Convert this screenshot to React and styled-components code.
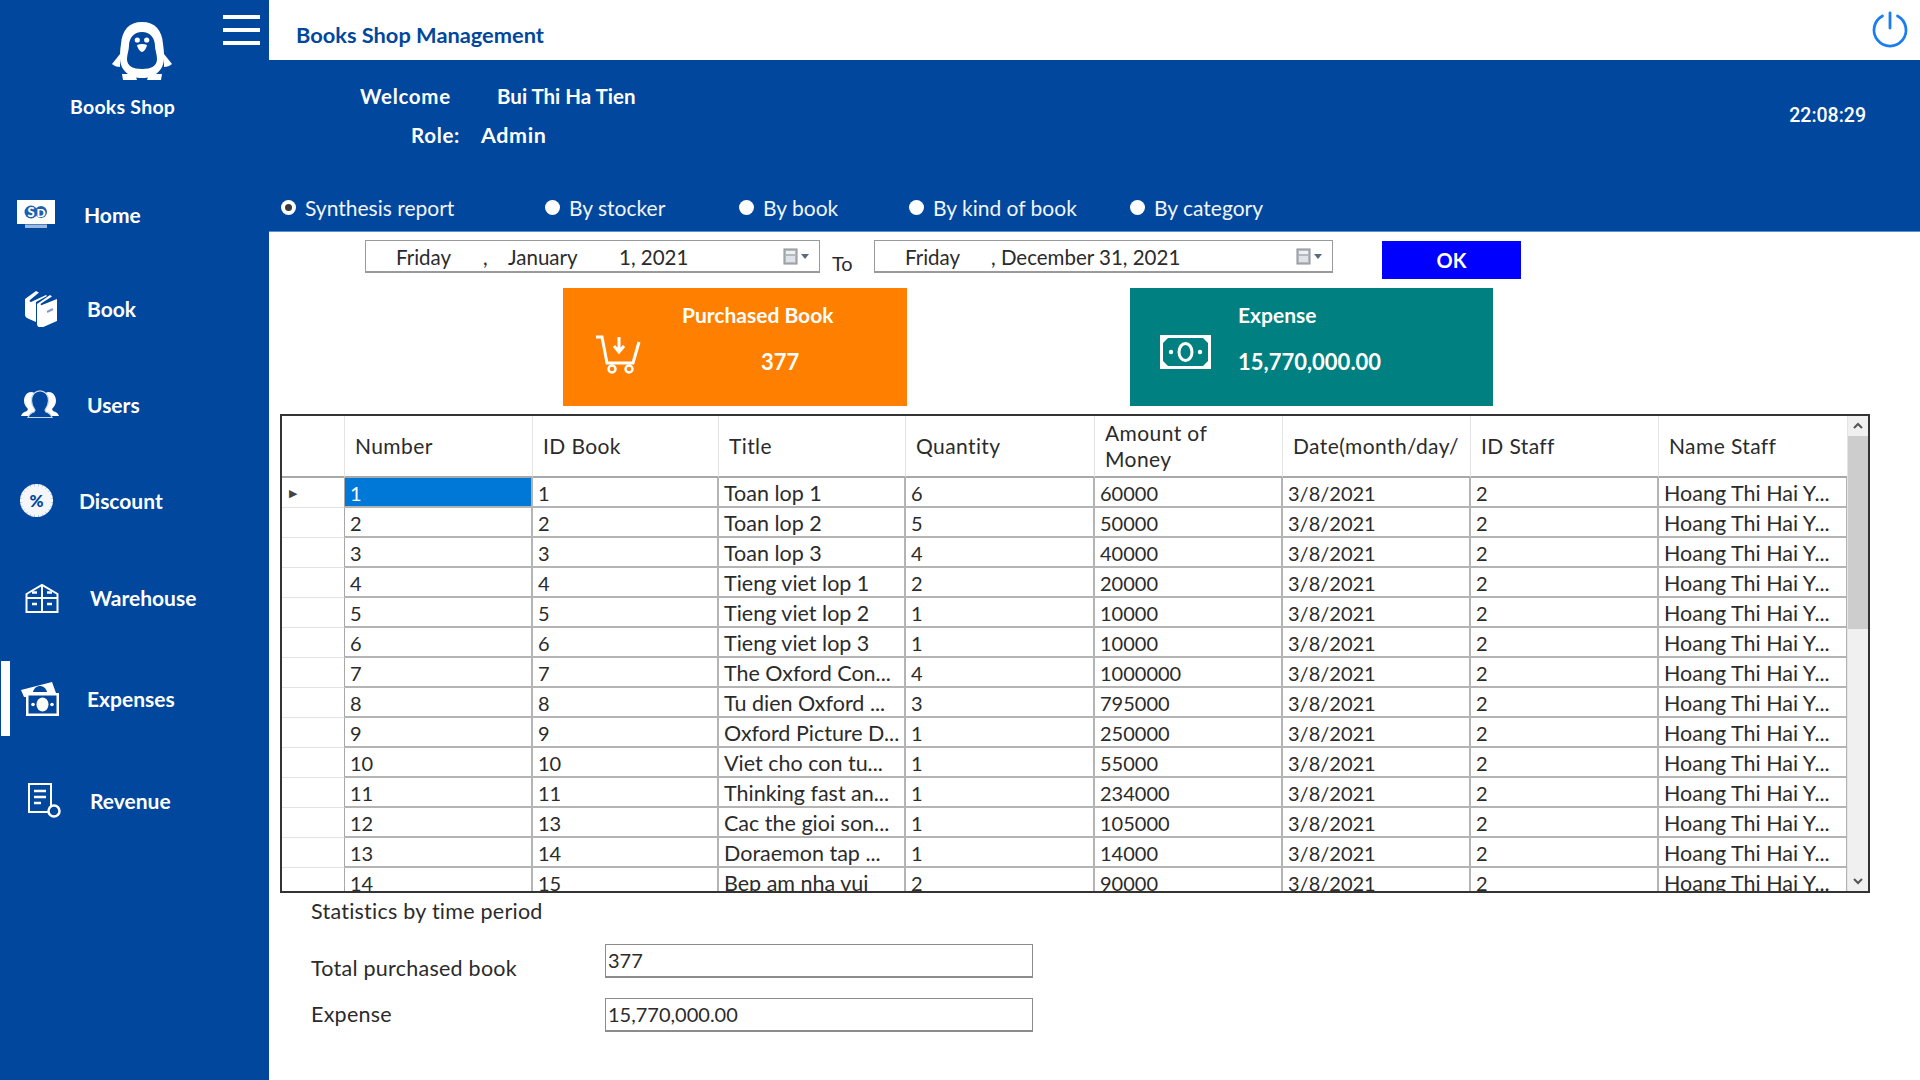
import React from "react";
import styled, { createGlobalStyle } from "styled-components";

const FONT = `"Lato", "Open Sans", sans-serif`;
const BLUE = "#00479d";

const GlobalStyle = createGlobalStyle`
  html, body {
    margin: 0;
    padding: 0;
    background: #fff;
    overflow: hidden;
  }
  * {
    box-sizing: border-box;
  }
`;

const Page = styled.div`
  width: 1920px;
  height: 1080px;
  display: flex;
  font-family: ${FONT};
  color: #2b2b2b;
  overflow: hidden;
`;

const Sidebar = styled.aside`
  width: 269px;
  flex: none;
  background: ${BLUE};
  color: #fff;
`;

const SidebarHead = styled.div`
  height: 158px;
  display: flex;
  align-items: flex-start;
`;

const Brand = styled.div`
  width: 223px;
  display: flex;
  flex-direction: column;
  padding-top: 20px;
`;

const Logo = styled.svg`
  width: 60px;
  height: 60px;
  margin-left: 112px;
`;

const BrandName = styled.div`
  margin: 15px 0 0 70px;
  font-size: 19.5px;
  font-weight: 700;
  letter-spacing: 0.25px;
`;

const Burger = styled.div`
  width: 37px;
  margin-top: 15px;
  display: flex;
  flex-direction: column;
  gap: 9px;

  span {
    height: 4px;
    background: #fff;
  }
`;

const Nav = styled.nav`
  display: flex;
  flex-direction: column;
`;

const NavItem = styled.a`
  height: 75px;
  margin-top: ${(p) => p.$gap}px;
  padding-left: ${(p) => p.$iconX}px;
  display: flex;
  align-items: center;
  position: relative;
  font-size: 21px;
  font-weight: 700;

  &::before {
    content: "";
    display: ${(p) => (p.$active ? "block" : "none")};
    position: absolute;
    left: 1px;
    top: 0;
    bottom: 0;
    width: 9px;
    background: #fff;
  }
`;

const NavIcon = styled.span`
  width: ${(p) => p.$width}px;
  flex: none;
  display: flex;
  align-items: center;

  svg {
    display: block;
  }
`;

const Main = styled.main`
  flex: 1;
  min-width: 0;
  display: flex;
  flex-direction: column;
`;

const TopBar = styled.header`
  height: 60px;
  flex: none;
  padding: 0 10px 0 27px;
  display: flex;
  align-items: center;
  justify-content: space-between;
`;

const AppTitle = styled.h1`
  margin: 9px 0 0;
  font-size: 21.8px;
  font-weight: 700;
  color: ${BLUE};
`;

const PowerIcon = styled.svg`
  width: 40px;
  height: 40px;
`;

const Band = styled.section`
  height: 172px;
  flex: none;
  background: ${BLUE};
  color: #fff;
  display: flex;
  flex-direction: column;
  border-bottom: 1px solid #5b8fcb;
`;

const BandTop = styled.div`
  height: 135px;
  padding: 0 54px 0 0;
  display: flex;
  justify-content: space-between;
`;

const Welcome = styled.div`
  padding-top: 23px;
  display: flex;
  flex-direction: column;
  gap: 13px;
`;

const WelcomeRow = styled.div`
  display: flex;
  height: 26px;
  align-items: center;
  padding-left: ${(p) => p.$left}px;
  font-size: 20.5px;
  font-weight: 700;
`;

const WelcomeLabel = styled.span`
  width: ${(p) => p.$width}px;
  letter-spacing: 0.7px;
`;

const RoleName = styled.span`
  font-size: 21.5px;
  letter-spacing: 0.6px;
`;

const Clock = styled.div`
  padding-top: 44px;
  font-family: "Roboto", sans-serif;
  font-size: 19.5px;
  font-weight: 500;
`;

const RadioRow = styled.div`
  padding-left: 12px;
  display: flex;
  align-items: center;
  height: 24px;
`;

const Radio = styled.label`
  width: ${(p) => p.$width}px;
  flex: none;
  display: flex;
  align-items: center;
  gap: 9px;
  font-size: 21px;
  color: #f1f5fb;
`;

const RadioDot = styled.span`
  width: 15px;
  height: 15px;
  border-radius: 50%;
  background: #fff;
  flex: none;
  display: flex;
  align-items: center;
  justify-content: center;

  &::after {
    content: "";
    display: ${(p) => (p.$checked ? "block" : "none")};
    width: 7px;
    height: 7px;
    border-radius: 50%;
    background: #3a3a3a;
  }
`;

const Content = styled.div`
  flex: 1;
  min-height: 0;
`;

const DateRow = styled.div`
  height: 39px;
  margin-top: 8px;
  padding-left: 96px;
  display: flex;
  align-items: flex-start;
`;

const DateBox = styled.div`
  width: ${(p) => p.$width}px;
  height: 33px;
  flex: none;
  padding: 2px 9px 0 30px;
  border: 1px solid #9a9a9a;
  border-bottom-width: 2px;
  display: flex;
  align-items: center;
  font-size: 20.5px;
  white-space: pre;
`;

const DatePart = styled.span`
  width: ${(p) => p.$width}px;
  flex: none;
`;

const CalendarIcon = styled.svg`
  width: 27px;
  height: 18px;
  margin-left: auto;
  flex: none;
`;

const ToLabel = styled.span`
  width: 54px;
  padding: 11px 0 0 12px;
  flex: none;
  font-size: 20px;
`;

const OkButton = styled.button`
  width: 139px;
  height: 38px;
  margin: 1px 0 0 49px;
  padding: 0;
  border: 0;
  background: #0000ff;
  color: #fff;
  font-family: ${FONT};
  font-size: 20px;
  font-weight: 700;
`;

const CardRow = styled.div`
  height: 118px;
  margin-top: 9px;
  padding-left: 294px;
  display: flex;
`;

const Card = styled.div`
  width: ${(p) => p.$width}px;
  margin-left: ${(p) => p.$offset || 0}px;
  background: ${(p) => p.$color};
  color: #fff;
  padding-left: ${(p) => p.$iconLeft}px;
  display: flex;
  align-items: flex-start;
`;

const CardIcon = styled.svg`
  width: ${(p) => p.$width}px;
  height: ${(p) => p.$height}px;
  margin-top: 47px;
  flex: none;
`;

const CardText = styled.div`
  margin-left: ${(p) => p.$gap}px;
  padding-top: 14px;
  display: flex;
  flex-direction: column;
  gap: 21px;
  font-size: 21px;
  font-weight: 700;
`;

const CardValue = styled.span`
  margin-left: ${(p) => p.$shift}px;
  font-size: 22px;
`;

const Grid = styled.div`
  width: 1590px;
  height: 479px;
  margin: 8px 0 0 11px;
  border: 2px solid #333;
  display: flex;
  overflow: hidden;
`;

const GridBody = styled.div`
  width: 1565px;
  flex: none;
  overflow: hidden;
`;

const Table = styled.table`
  width: 1565px;
  table-layout: fixed;
  border-collapse: separate;
  border-spacing: 0;
  font-size: 20px;
`;

const HeadCell = styled.th`
  height: 62px;
  padding: 0 ${(p) => (p.$wrap ? 40 : 0)}px 0 10px;
  border-right: 1px solid #e3e3e3;
  border-bottom: 2px solid #a8a8a8;
  font-size: 21px;
  font-weight: 400;
  letter-spacing: 0.4px;
  text-align: left;
  line-height: 26px;
  overflow: hidden;
  white-space: ${(p) => (p.$wrap ? "normal" : "nowrap")};
`;

const RowHead = styled.td`
  height: 30px;
  padding: 0 0 0 7px;
  border-right: 1px solid #a8a8a8;
  border-bottom: 1px solid #e3e3e3;
  color: #444;
  font-size: 11px;
`;

const Cell = styled.td`
  height: 30px;
  padding: 2px 0 0 5px;
  border-right: 2px solid #b4b4b4;
  border-bottom: 2px solid #b4b4b4;
  font-size: ${(p) => (p.$text ? 21.5 : 20)}px;
  white-space: nowrap;
  overflow: hidden;
  background: ${(p) => (p.$selected ? "#0078d7" : "#fff")};
  color: ${(p) => (p.$selected ? "#fff" : "#2b2b2b")};
`;

const Scrollbar = styled.div`
  flex: 1;
  background: #f0f0f0;
  display: flex;
  flex-direction: column;
  align-items: stretch;
  border-left: 1px solid #e3e3e3;
`;

const ScrollArrow = styled.svg`
  width: 100%;
  height: 20px;
  flex: none;
`;

const ScrollThumb = styled.div`
  height: 193px;
  background: #cdcdcd;
  flex: none;
`;

const ScrollSpace = styled.div`
  flex: 1;
`;

const Stats = styled.section`
  margin: 6px 0 0 42px;
  font-size: 21.5px;
  letter-spacing: 0.25px;
`;

const StatsTitle = styled.div`
  height: 24px;
  line-height: 24px;
  margin-bottom: 21px;
`;

const StatRow = styled.div`
  display: flex;
  margin-bottom: 17px;
`;

const StatLabel = styled.span`
  width: 294px;
  padding-top: ${(p) => p.$offset}px;
  flex: none;
`;

const StatInput = styled.div`
  width: 428px;
  height: 34px;
  padding-left: 2px;
  border: 1px solid #8c8c8c;
  border-bottom-width: 2px;
  font-size: 20px;
  letter-spacing: 0;
  line-height: 30px;
`;

const rows = [
  [1, 1, "Toan lop 1", 6, 60000],
  [2, 2, "Toan lop 2", 5, 50000],
  [3, 3, "Toan lop 3", 4, 40000],
  [4, 4, "Tieng viet lop 1", 2, 20000],
  [5, 5, "Tieng viet lop 2", 1, 10000],
  [6, 6, "Tieng viet lop 3", 1, 10000],
  [7, 7, "The Oxford Con...", 4, 1000000],
  [8, 8, "Tu dien Oxford ...", 3, 795000],
  [9, 9, "Oxford Picture D...", 1, 250000],
  [10, 10, "Viet cho con tu...", 1, 55000],
  [11, 11, "Thinking fast an...", 1, 234000],
  [12, 13, "Cac the gioi son...", 1, 105000],
  [13, 14, "Doraemon tap ...", 1, 14000],
  [14, 15, "Bep am nha vui", 2, 90000],
];

const columns = [
  { label: "Number", width: 188 },
  { label: "ID Book", width: 186 },
  { label: "Title", width: 187 },
  { label: "Quantity", width: 189 },
  { label: "Amount of Money", width: 188, wrap: true },
  { label: "Date(month/day/", width: 188 },
  { label: "ID Staff", width: 188 },
  { label: "Name Staff", width: 189 },
];

function Penguin() {
  return (
    <Logo viewBox="0 0 60 60" aria-hidden="true">
      <path d="M0 44l8-10v13c-3 0-6-1-8-3zM60 44l-8-10v13c3 0 6-1 8-3z" fill="#fff" />
      <path d="M10 54h13l2 6H11zM50 54H37l-2 6h14z" fill="#fff" />
      <path d="M30 2C17 2 10 10 9 24c-1 6-1 10-1 14 0 12 9 20 22 20s22-8 22-20c0-4 0-8-1-14C50 10 43 2 30 2z" fill="#fff" />
      <path d="M30 12c-8 0-13 6-13 14 0 4-2 8-2 13 0 7 6 10 15 10s15-3 15-10c0-5-2-9-2-13 0-8-5-14-13-14z" fill={BLUE} />
      <circle cx="25.3" cy="20" r="2.6" fill="#fff" />
      <circle cx="34.7" cy="20" r="2.6" fill="#fff" />
      <path d="M25 25c3-1.500 7-1.500 10 0-.5 3-3 7-5 7s-4.500-4-5-7z" fill="#fff" />
    </Logo>
  );
}

function HomeIcon() {
  return (
    <svg width="38" height="29" viewBox="0 0 38 29" aria-hidden="true">
      <rect x="0" y="0" width="38" height="24" fill="#fff" />
      <rect x="8" y="24.500" width="22" height="3.500" fill="#9db8de" />
      <circle cx="14" cy="12" r="6.500" fill="#1f5fae" />
      <circle cx="24" cy="12" r="6" fill="#1f5fae" />
      <text x="10.500" y="16.500" fontSize="13" fontWeight="900" fontFamily="Lato" fill="#fff">S</text>
      <text x="19.500" y="16.500" fontSize="12" fontWeight="900" fontFamily="Lato" fill="#fff">D</text>
    </svg>
  );
}

function BookIcon() {
  return (
    <svg width="32" height="37" viewBox="0 0 32 37" aria-hidden="true">
      <path d="M0 9L11 1l3 1.500L5 10c-1 1 0 2 1 2l15-7 1 1-11 6v20l-7-3c-2-1-4-2-4-4z" fill="#fff" />
      <path d="M12 14L25 5l2 1.500-11 7c-1 1 0 2 1 1.500l15-6v22l-16 7c-2 0-4-2-4-4z" fill="#fff" />
      <path d="M22 22l6-3" stroke="#7f9fcc" strokeWidth="2" />
    </svg>
  );
}

function UsersIcon() {
  return (
    <svg width="38" height="29" viewBox="0 0 38 29" aria-hidden="true">
      <path d="M10 2c5 0 8 4 8 9 0 4-2 7-3 9v6H0c1-3 3-4 6-5l1-2c-2-2-4-5-4-8 0-5 3-9 7-9z" fill="#fff" />
      <path d="M28 2c-5 0-8 4-8 9 0 4 2 7 3 9v6h15c-1-3-3-4-6-5l-1-2c2-2 4-5 4-8 0-5-3-9-7-9z" fill="#fff" />
      <path d="M19 .8c5 0 8.500 4.200 8.500 9.700 0 4-2 7.500-3.500 9.500l1 2c3 1 5 2.500 6 5.500H7c1-3 3-4.500 6-5.500l1-2c-1.500-2-3.500-5.500-3.500-9.500C10.500 5 14 .8 19 .8z" fill={BLUE} stroke="#c6d6ec" strokeWidth="1.200" />
    </svg>
  );
}

function DiscountIcon() {
  const teeth = Array.from({ length: 12 }, (_, i) => i * 15);
  return (
    <svg width="33" height="33" viewBox="0 0 33 33" aria-hidden="true">
      {teeth.map((deg) => (
        <rect key={deg} x="14.500" y="0" width="4" height="33" fill="#f4f6fa" transform={`rotate(${deg} 16.5 16.5)`} />
      ))}
      <circle cx="16.500" cy="16.500" r="13.500" fill="#f4f6fa" />
      <text x="16.500" y="22.500" textAnchor="middle" fontSize="17" fontWeight="900" fontFamily="Lato" fill={BLUE}>%</text>
    </svg>
  );
}

function WarehouseIcon() {
  return (
    <svg width="34" height="30" viewBox="0 0 34 30" fill="none" stroke="#fff" strokeWidth="2" aria-hidden="true">
      <path d="M1.500 11L17 2l15.500 9v18H1.500zM1.500 15h31M17 2v27" />
      <path d="M7 21h5M22 21h5M7 9.500h5M22 9.500h5" strokeWidth="2.500" />
    </svg>
  );
}

function ExpensesIcon() {
  return (
    <svg width="38" height="35" viewBox="0 0 38 35" aria-hidden="true">
      <path d="M0 9L31 1l4 11H5l1 4H3z" fill="#fff" />
      <path d="M12 11c1-4 4-6 7-6s6 2 7 6z" fill={BLUE} />
      <rect x="5" y="12" width="33" height="23" fill="#fff" />
      <rect x="7.500" y="14.500" width="28" height="18" fill={BLUE} />
      <ellipse cx="21.500" cy="23.500" rx="6" ry="7" fill="#fff" />
      <circle cx="12" cy="23.500" r="1.800" fill="#fff" />
      <circle cx="31" cy="23.500" r="1.800" fill="#fff" />
    </svg>
  );
}

function RevenueIcon() {
  return (
    <svg width="34" height="36" viewBox="0 0 34 36" fill="none" stroke="#fff" strokeWidth="2" aria-hidden="true">
      <path d="M23 23V1H1v28h19" />
      <path d="M6 8h12M6 14h12M6 20h7" strokeWidth="2.500" />
      <circle cx="26" cy="28" r="5.500" strokeWidth="2.500" />
    </svg>
  );
}

function DateIcon() {
  return (
    <CalendarIcon viewBox="0 0 27 18" aria-hidden="true">
      <rect x="1" y="1" width="13" height="15" fill="#b5b8bc" stroke="#8a8f96" />
      <rect x="3" y="3" width="9" height="3" fill="#eef1f4" />
      <rect x="3" y="8" width="9" height="6" fill="#dfe2e6" />
      <path d="M18 6h8l-4 5z" fill="#5c6a80" />
    </CalendarIcon>
  );
}

function App() {
  return (
    <Page>
      <GlobalStyle />
      <Sidebar>
        <SidebarHead>
          <Brand>
            <Penguin />
            <BrandName>Books Shop</BrandName>
          </Brand>
          <Burger>
            <span />
            <span />
            <span />
          </Burger>
        </SidebarHead>
        <Nav>
          <NavItem $gap={19} $iconX={17}>
            <NavIcon $width={67}><HomeIcon /></NavIcon>Home
          </NavItem>
          <NavItem $gap={19} $iconX={25}>
            <NavIcon $width={62}><BookIcon /></NavIcon>Book
          </NavItem>
          <NavItem $gap={21} $iconX={21}>
            <NavIcon $width={66}><UsersIcon /></NavIcon>Users
          </NavItem>
          <NavItem $gap={21} $iconX={20}>
            <NavIcon $width={59}><DiscountIcon /></NavIcon>Discount
          </NavItem>
          <NavItem $gap={22} $iconX={25}>
            <NavIcon $width={65}><WarehouseIcon /></NavIcon>Warehouse
          </NavItem>
          <NavItem $gap={26} $iconX={21} $active>
            <NavIcon $width={66}><ExpensesIcon /></NavIcon>Expenses
          </NavItem>
          <NavItem $gap={27} $iconX={28}>
            <NavIcon $width={62}><RevenueIcon /></NavIcon>Revenue
          </NavItem>
        </Nav>
      </Sidebar>
      <Main>
        <TopBar>
          <AppTitle>Books Shop Management</AppTitle>
          <PowerIcon viewBox="0 0 40 40" fill="none" stroke="#1a7df0" strokeWidth="2.800" strokeLinecap="round" aria-hidden="true">
            <path d="M12.500 5.900a16 16 0 1 0 15 0" />
            <path d="M20 3v15" />
          </PowerIcon>
        </TopBar>
        <Band>
          <BandTop>
            <Welcome>
              <WelcomeRow $left={91}>
                <WelcomeLabel $width={137}>Welcome</WelcomeLabel>Bui Thi Ha Tien
              </WelcomeRow>
              <WelcomeRow $left={142}>
                <WelcomeLabel $width={70}>Role:</WelcomeLabel>
                <RoleName>Admin</RoleName>
              </WelcomeRow>
            </Welcome>
            <Clock>22:08:29</Clock>
          </BandTop>
          <RadioRow>
            <Radio $width={264}><RadioDot $checked />Synthesis report</Radio>
            <Radio $width={194}><RadioDot />By stocker</Radio>
            <Radio $width={170}><RadioDot />By book</Radio>
            <Radio $width={221}><RadioDot />By kind of book</Radio>
            <Radio $width={200}><RadioDot />By category</Radio>
          </RadioRow>
        </Band>
        <Content>
          <DateRow>
            <DateBox $width={455}>
              <DatePart $width={87}>Friday</DatePart>
              <DatePart $width={25}>,</DatePart>
              <DatePart $width={111}>January</DatePart>
              <span>1, 2021</span>
              <DateIcon />
            </DateBox>
            <ToLabel>To</ToLabel>
            <DateBox $width={459}>
              <DatePart $width={86}>Friday</DatePart>
              <span>, December 31, 2021</span>
              <DateIcon />
            </DateBox>
            <OkButton>OK</OkButton>
          </DateRow>
          <CardRow>
            <Card $width={344} $color="#ff8000" $iconLeft={32}>
              <CardIcon $width={46} $height={40} viewBox="0 0 46 40" fill="none" stroke="#fff" strokeWidth="3" aria-hidden="true">
                <path d="M1 2h6l5 26h26l6-21" />
                <path d="M24 2v14M19 11l5 6 5-6" strokeWidth="3" />
                <circle cx="17" cy="34" r="3.500" strokeWidth="2.500" />
                <circle cx="34" cy="34" r="3.500" strokeWidth="2.500" />
              </CardIcon>
              <CardText $gap={41}>
                <span>Purchased Book</span>
                <CardValue $shift={79}>377</CardValue>
              </CardText>
            </Card>
            <Card $width={363} $offset={223} $color="#008080" $iconLeft={30}>
              <CardIcon $width={51} $height={34} viewBox="0 0 51 34" aria-hidden="true">
                <rect x="0" y="0" width="51" height="34" fill="#fff" />
                <path d="M8 3h35l5 5v18l-5 5H8l-5-5V8z" fill="#008080" />
                <ellipse cx="25.500" cy="17" rx="6.500" ry="8.500" fill="none" stroke="#fff" strokeWidth="3" />
                <circle cx="11" cy="17" r="2.200" fill="#fff" />
                <circle cx="40" cy="17" r="2.200" fill="#fff" />
              </CardIcon>
              <CardText $gap={27}>
                <span>Expense</span>
                <CardValue $shift={0}>15,770,000.00</CardValue>
              </CardText>
            </Card>
          </CardRow>
          <Grid>
            <GridBody>
              <Table>
                <colgroup>
                  <col style={{ width: 63 }} />
                  {columns.map((c) => (
                    <col key={c.label} style={{ width: c.width }} />
                  ))}
                </colgroup>
                <thead>
                  <tr>
                    <HeadCell />
                    {columns.map((c) => (
                      <HeadCell key={c.label} $wrap={c.wrap}>{c.label}</HeadCell>
                    ))}
                  </tr>
                </thead>
                <tbody>
                  {rows.map((r, i) => (
                    <tr key={r[0]}>
                      <RowHead>{i === 0 ? "\u25B6" : ""}</RowHead>
                      <Cell $selected={i === 0}>{r[0]}</Cell>
                      <Cell>{r[1]}</Cell>
                      <Cell $text>{r[2]}</Cell>
                      <Cell>{r[3]}</Cell>
                      <Cell>{r[4]}</Cell>
                      <Cell>3/8/2021</Cell>
                      <Cell>2</Cell>
                      <Cell $text>Hoang Thi Hai Y...</Cell>
                    </tr>
                  ))}
                </tbody>
              </Table>
            </GridBody>
            <Scrollbar>
              <ScrollArrow viewBox="0 0 20 20" fill="none" stroke="#555" strokeWidth="2" aria-hidden="true">
                <path d="M6 12l4-4 4 4" />
              </ScrollArrow>
              <ScrollThumb />
              <ScrollSpace />
              <ScrollArrow viewBox="0 0 20 20" fill="none" stroke="#555" strokeWidth="2" aria-hidden="true">
                <path d="M6 8l4 4 4-4" />
              </ScrollArrow>
            </Scrollbar>
          </Grid>
          <Stats>
            <StatsTitle>Statistics by time period</StatsTitle>
            <StatRow>
              <StatLabel $offset={11}>Total purchased book</StatLabel>
              <StatInput>377</StatInput>
            </StatRow>
            <StatRow>
              <StatLabel $offset={3}>Expense</StatLabel>
              <StatInput>15,770,000.00</StatInput>
            </StatRow>
          </Stats>
        </Content>
      </Main>
    </Page>
  );
}

export default App;
